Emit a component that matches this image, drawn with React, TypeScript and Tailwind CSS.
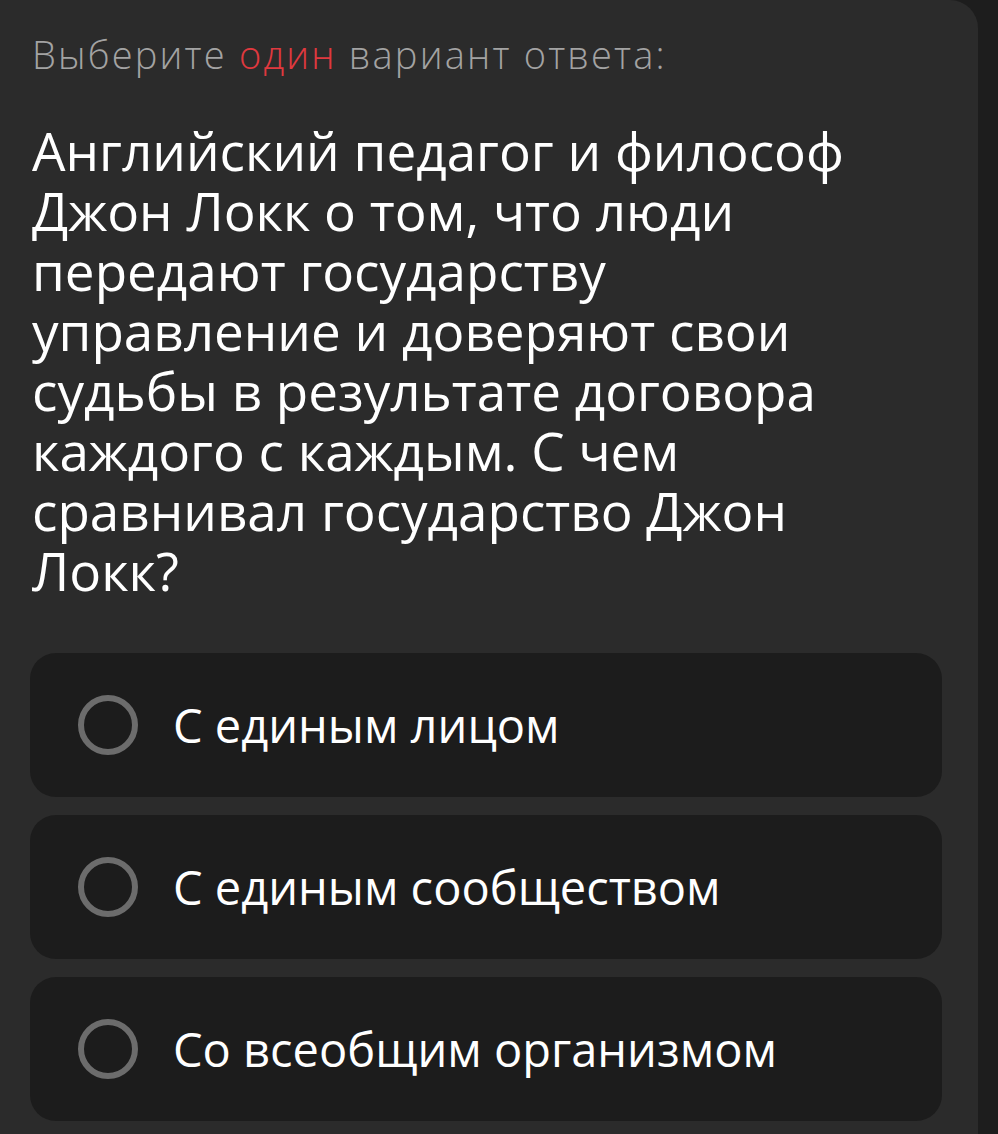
import { Fragment } from "react";

const OPTIONS = ["С единым лицом", "С единым сообществом", "Со всеобщим организмом"];

const QUESTION = [
  "Английский педагог и философ",
  "Джон Локк о том, что люди",
  "передают государству",
  "управление и доверяют свои",
  "судьбы в результате договора",
  "каждого с каждым. С чем",
  "сравнивал государство Джон",
  "Локк?",
];

function Option({ label }: { label: string }) {
  return (
    <button className="flex h-[144px] w-full items-center rounded-[26px] bg-[#1c1c1c] pl-[48px] text-left">
      <span className="h-[60px] w-[60px] shrink-0 rounded-full border-[6px] border-[#6c6c6c]" />
      <span className="ml-[35px] text-[47px] font-normal leading-none text-white">{label}</span>
    </button>
  );
}

export default function App() {
  return (
    <div
      className="flex h-[1134px] w-full overflow-hidden bg-[#1d1d1d]"
      style={{ fontFamily: '"Open Sans", "DejaVu Sans", sans-serif' }}
    >
      <div className="w-[978px] shrink-0 rounded-tr-[28px] bg-[#2b2b2b] pl-[32px] pr-[36px] pt-[32px]">
        {/* Instruction */}
        <p className="text-[38px] font-light leading-[44px] tracking-[2.2px] text-[#a3a3a3]">
          Выберите <span className="text-[#e0393f]">один</span> вариант ответа:
        </p>

        {/* Question */}
        <h1 className="mt-[45px] whitespace-nowrap text-[53px] font-medium leading-[60px] text-white">
          {QUESTION.map((line, i) => (
            <Fragment key={i}>
              {line}
              {i < QUESTION.length - 1 && <br />}
            </Fragment>
          ))}
        </h1>

        {/* Answers */}
        <div className="-ml-[2px] mt-[52px] flex flex-col gap-[18px]">
          {OPTIONS.map((o) => (
            <Option key={o} label={o} />
          ))}
        </div>
      </div>
    </div>
  );
}
